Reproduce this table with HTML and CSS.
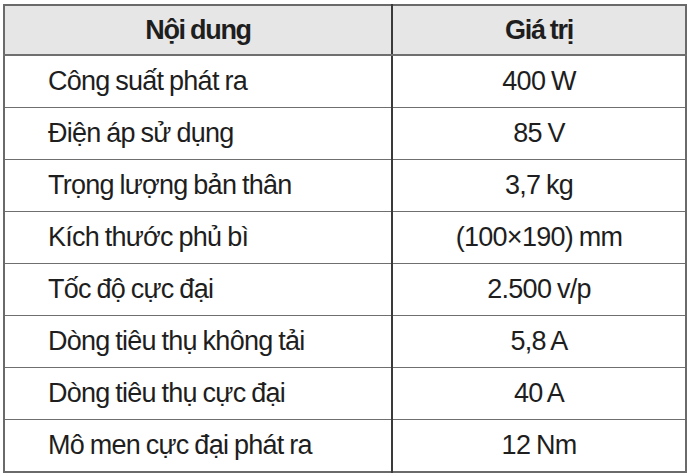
FILE: index.html
```html
<!DOCTYPE html>
<html lang="vi">
<head>
<meta charset="utf-8">
<link rel="stylesheet" href="styles.css">
</head>
<body>
<table class="spec">
  <thead>
    <tr><th class="col-name">Nội dung</th><th class="col-value">Giá trị</th></tr>
  </thead>
  <tbody>
    <tr><td class="name">Công suất phát ra</td><td class="value">400 W</td></tr>
    <tr><td class="name">Điện áp sử dụng</td><td class="value">85 V</td></tr>
    <tr><td class="name">Trọng lượng bản thân</td><td class="value">3,7 kg</td></tr>
    <tr><td class="name">Kích thước phủ bì</td><td class="value">(100×190) mm</td></tr>
    <tr><td class="name">Tốc độ cực đại</td><td class="value">2.500 v/p</td></tr>
    <tr><td class="name">Dòng tiêu thụ không tải</td><td class="value">5,8 A</td></tr>
    <tr><td class="name">Dòng tiêu thụ cực đại</td><td class="value">40 A</td></tr>
    <tr><td class="name">Mô men cực đại phát ra</td><td class="value">12 Nm</td></tr>
  </tbody>
</table>
</body>
</html>
```
FILE: styles.css
```css
html, body {
  margin: 0;
  padding: 0;
  background: #ffffff;
}
body {
  padding: 4px 0 0 3px;
  font-family: "Liberation Sans", Arial, sans-serif;
  color: #1e1e1e;
}
.spec {
  border-collapse: collapse;
  width: 684px;
  border: 2px solid #6a6a6a;
  font-size: 27px;
  letter-spacing: -0.75px;
  word-spacing: -1px;
}
.spec th,
.spec td {
  padding: 0;
  height: 51px;
  border-top: 1px solid #6f6f6f;
  border-bottom: 1px solid #6f6f6f;
}
.spec thead th {
  background: #e6e6e6;
  font-weight: bold;
  font-size: 27px;
  letter-spacing: -1.3px;
  text-align: center;
  height: 48px;
  border-bottom: 2px solid #6f6f6f;
}
.spec .col-name {
  width: 386px;
  border-right: 2px solid #3a3a3a;
}
.spec .name {
  text-align: left;
  padding-left: 43px;
  border-right: 2px solid #3a3a3a;
}
.spec .value {
  text-align: center;
}
```
